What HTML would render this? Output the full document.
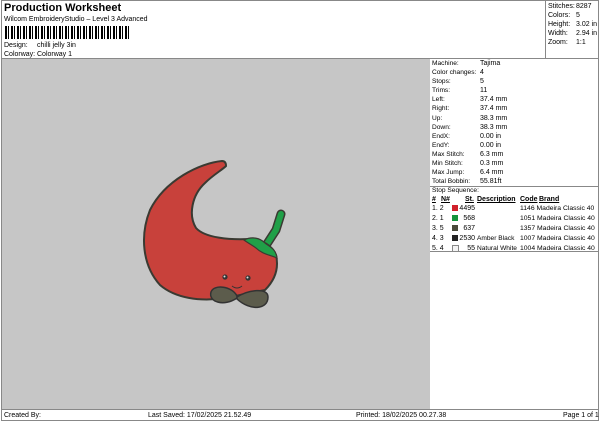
<html><head><style>
body{margin:0;width:600px;height:424px;background:#fff;position:relative;font-family:"Liberation Sans",sans-serif;font-size:7px;color:#000;overflow:hidden}
.a{position:absolute;white-space:nowrap;line-height:9px}
.l{position:absolute;background:#888}
</style></head><body>
<div class="l" style="left:1px;top:0;width:1px;height:421px"></div>
<div class="l" style="left:598px;top:0;width:1px;height:421px"></div>
<div class="l" style="left:1px;top:0;width:598px;height:1px"></div>
<div class="l" style="left:1px;top:420px;width:598px;height:1px"></div>
<div class="l" style="left:545px;top:0;width:1px;height:58px"></div>
<div class="l" style="left:1px;top:58px;width:598px;height:1px"></div>
<div class="l" style="left:1px;top:409px;width:598px;height:1px"></div>
<div class="l" style="left:430px;top:186px;width:168px;height:1px"></div>
<div class="l" style="left:430px;top:251px;width:168px;height:1px"></div>
<div style="position:absolute;left:2px;top:59px;width:428px;height:350px;background:#c6c6c6"></div>
<div class="a" style="left:4px;top:2px;font-size:11px;font-weight:bold;line-height:13px">Production Worksheet</div>
<div class="a" style="left:4px;top:15px">Wilcom EmbroideryStudio – Level 3 Advanced</div>
<div style="position:absolute;left:5px;top:26px;width:126px;height:13px;background:repeating-linear-gradient(90deg,#000 0 2px,#fff 2px 3px,#000 3px 4px,#fff 4px 6px)"></div>
<div class="a" style="left:4px;top:41px">Design:</div><div class="a" style="left:37px;top:41px">chilli jelly 3in</div>
<div class="a" style="left:4px;top:50px">Colorway:</div><div class="a" style="left:37px;top:50px">Colorway 1</div>
<div class="a" style="left:548px;top:2px">Stitches:</div><div class="a" style="left:576px;top:2px">8287</div>
<div class="a" style="left:548px;top:11px">Colors:</div><div class="a" style="left:576px;top:11px">5</div>
<div class="a" style="left:548px;top:20px">Height:</div><div class="a" style="left:576px;top:20px">3.02 in</div>
<div class="a" style="left:548px;top:29px">Width:</div><div class="a" style="left:576px;top:29px">2.94 in</div>
<div class="a" style="left:548px;top:38px">Zoom:</div><div class="a" style="left:576px;top:38px">1:1</div>
<div class="a" style="left:432px;top:59px;line-height:9.1px;font-size:6.6px">Machine:<br>Color changes:<br>Stops:<br>Trims:<br>Left:<br>Right:<br>Up:<br>Down:<br>EndX:<br>EndY:<br>Max Stitch:<br>Min Stitch:<br>Max Jump:<br>Total Bobbin:<br>Stop Sequence:</div>
<div class="a" style="left:480px;top:59px;line-height:9.1px">Tajima<br>4<br>5<br>11<br>37.4 mm<br>37.4 mm<br>38.3 mm<br>38.3 mm<br>0.00 in<br>0.00 in<br>6.3 mm<br>0.3 mm<br>6.4 mm<br>55.81ft</div>
<div class="a" style="left:432px;top:195px;font-weight:bold;text-decoration:underline">#</div>
<div class="a" style="left:441px;top:195px;font-weight:bold;text-decoration:underline">N#</div>
<div class="a" style="left:465px;top:195px;font-weight:bold;text-decoration:underline">St.</div>
<div class="a" style="left:477px;top:195px;font-weight:bold;text-decoration:underline">Description</div>
<div class="a" style="left:520px;top:195px;font-weight:bold;text-decoration:underline">Code</div>
<div class="a" style="left:539px;top:195px;font-weight:bold;text-decoration:underline">Brand</div>
<div class="a" style="left:432px;top:204px;line-height:10px">1. 2<br>2. 1<br>3. 5<br>4. 3<br>5. 4</div>
<div style="position:absolute;left:452px;top:205px;width:6px;height:6px;background:#d0202a"></div>
<div style="position:absolute;left:452px;top:215px;width:6px;height:6px;background:#16933c"></div>
<div style="position:absolute;left:452px;top:225px;width:6px;height:6px;background:#4a4a3a"></div>
<div style="position:absolute;left:452px;top:235px;width:6px;height:6px;background:#222"></div>
<div style="position:absolute;left:452px;top:245px;width:5px;height:5px;border:1px solid #888;background:#f4f4f4"></div>
<div class="a" style="left:459px;top:204px;width:16px;text-align:right;line-height:10px">4495<br>568<br>637<br>2530<br>55</div>
<div class="a" style="left:477px;top:204px;line-height:10px;font-size:6.6px"><br><br><br>Amber Black<br>Natural White</div>
<div class="a" style="left:520px;top:204px;line-height:10px;font-size:6.8px">1146 Madeira Classic 40<br>1051 Madeira Classic 40<br>1357 Madeira Classic 40<br>1007 Madeira Classic 40<br>1004 Madeira Classic 40</div>
<div class="a" style="left:4px;top:411px">Created By:</div>
<div class="a" style="left:148px;top:411px">Last Saved: 17/02/2025 21.52.49</div>
<div class="a" style="left:356px;top:411px">Printed: 18/02/2025 00.27.38</div>
<div class="a" style="left:563px;top:411px">Page 1 of 1</div>
<svg style="position:absolute;left:0;top:0" width="600" height="424">
<path d="M263,250 L276,230 L281,214" stroke="#3a3a32" stroke-width="9" fill="none" stroke-linecap="round"/>
<path d="M263,250 L276,230 L281,214" stroke="#20a048" stroke-width="6" fill="none" stroke-linecap="round"/>
<path d="M222,161 C200,163 165,180 150,210 C140,235 142,265 160,285 C175,298 200,302 225,298 L265,290 C275,280 279,268 276,255 C272,245 262,240 250,239 C230,240 205,238 196,228 C188,215 192,195 205,183 C213,175 222,170 226,166 C226,162 224,161 222,161 Z" fill="#c8413b" stroke="#3a3a32" stroke-width="2"/>
<path d="M244,240 C252,236 260,238 265,243 C270,247 276,249 277,258 C270,255 262,254 256,248 C252,245 248,243 244,240 Z" fill="#20a048" stroke="#3a3a32" stroke-width="1.2"/>
<circle cx="225" cy="277" r="2.6" fill="#333"/><circle cx="248" cy="278" r="2.6" fill="#333"/>
<circle cx="224.5" cy="276.5" r="1" fill="#ddd"/><circle cx="247.5" cy="277.5" r="1" fill="#ddd"/>
<path d="M232,286 Q237,290 242,286" stroke="#333" fill="none" stroke-width="1"/>
<path d="M237,296 C232,286 214,284 211,292 C208,302 224,307 237,298 Z" fill="#5c5c4c" stroke="#333" stroke-width="1.5"/>
<path d="M237,297 C248,290 268,287 268,297 C268,310 250,311 237,299 Z" fill="#5c5c4c" stroke="#333" stroke-width="1.5"/>
</svg>
</body></html>
